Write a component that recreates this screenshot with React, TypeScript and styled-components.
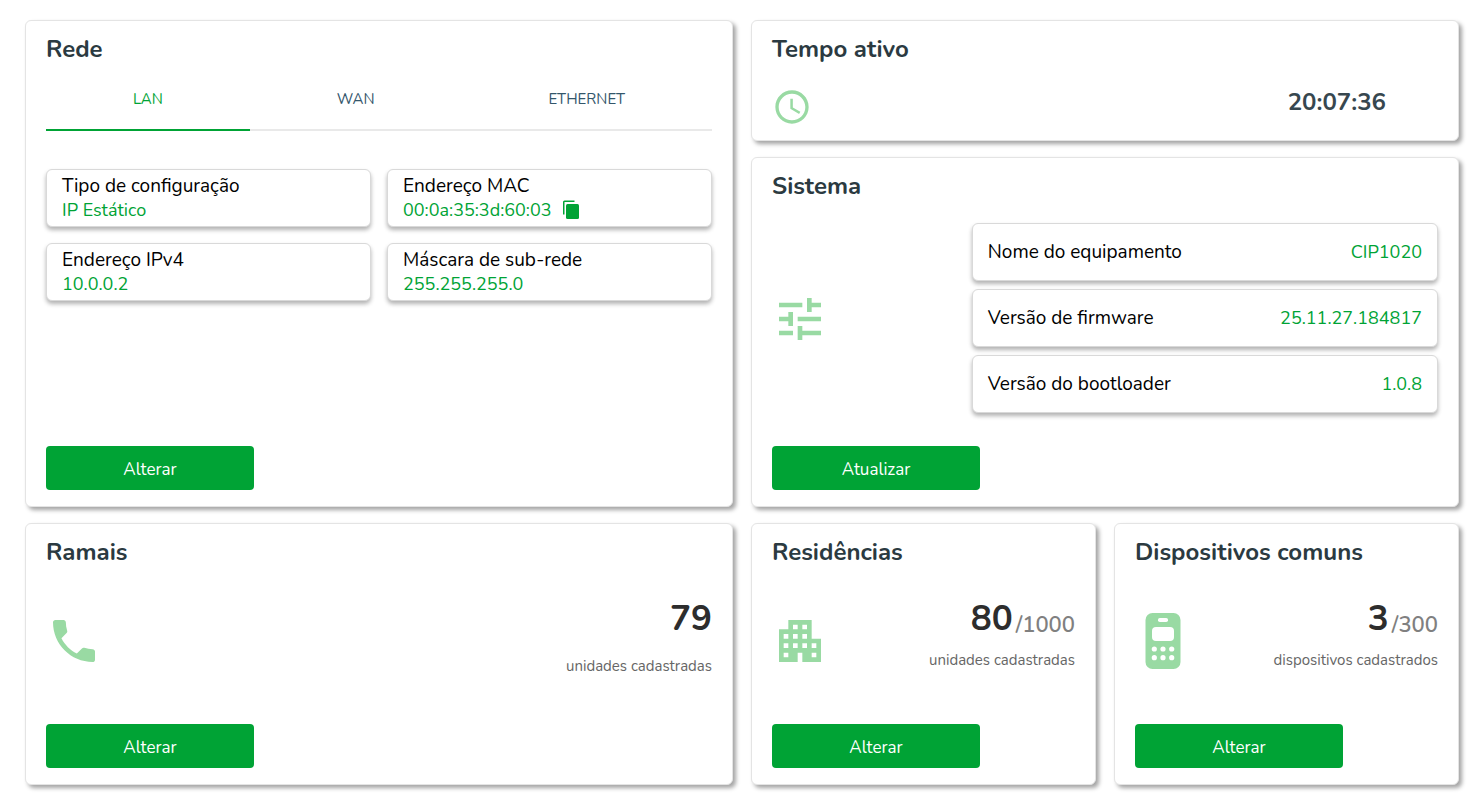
import React, { useState } from 'react';
import styled, { createGlobalStyle, css } from 'styled-components';
import { MdAccessTime, MdApartment, MdPhone, MdTune } from 'react-icons/md';

const green = '#00a335';
const paleGreen = '#99daa3';

const GlobalStyle = createGlobalStyle`
  *, *::before, *::after { box-sizing: border-box; }
  body {
    margin: 0;
    background: #fff;
    color: #000;
    font-family: Nunito, "Open Sans", "Noto Sans", sans-serif;
    font-size: 18px;
    line-height: 24px;
  }
  button { font-family: inherit; }
`;

const Dashboard = styled.main`
  display: grid;
  grid-template-columns: repeat(2, minmax(0, 1fr));
  gap: 16px 18px;
  padding: 20px 15px 16px 25px;
`;

const Stack = styled.div`
  display: flex;
  flex-direction: column;
  gap: 16px;
`;

const Pair = styled.div`
  display: grid;
  grid-template-columns: repeat(2, minmax(0, 1fr));
  gap: 18px;
`;

const Card = styled.section<{ $minHeight?: number }>`
  display: flex;
  flex-direction: column;
  min-height: ${p => p.$minHeight ?? 0}px;
  padding: 12px 20px;
  border: 1px solid #e4e4e4;
  border-radius: 6px;
  background: #fff;
  box-shadow: 3px 3px 4px rgba(0, 0, 0, 0.36);
`;

const Title = styled.h2`
  margin: 0;
  color: #2b3a41;
  font-size: 24px;
  font-weight: 700;
  line-height: 32px;
`;

const Tabs = styled.div`
  display: flex;
  margin-bottom: 38px;
  padding-top: 2px;
`;

const Tab = styled.button<{ $active: boolean }>`
  flex: 1 1 auto;
  height: 64px;
  padding: 2px 0 0;
  border: 0;
  border-bottom: 2px solid ${p => (p.$active ? green : '#e9e9e9')};
  background: none;
  color: ${p => (p.$active ? green : '#33566b')};
  font-size: 15px;
  line-height: 20px;
  cursor: pointer;
`;

const InfoGrid = styled.dl`
  display: grid;
  grid-template-columns: repeat(2, minmax(0, 1fr));
  gap: 16px;
  margin: 0 0 24px;
`;

const InfoList = styled.dl`
  display: flex;
  flex: 0 0 70%;
  flex-direction: column;
  gap: 8px;
  margin: 0;
`;

const InfoBox = styled.div<{ $inline?: boolean }>`
  min-height: 58px;
  padding: 4px 15px;
  border: 1px solid #d9d9d9;
  border-radius: 6px;
  background: #fff;
  box-shadow: 0 3px 4px rgba(0, 0, 0, 0.3);
  ${p =>
    p.$inline &&
    css`
      display: flex;
      align-items: center;
      justify-content: space-between;
    `}
`;

const InfoLabel = styled.dt`
  font-size: 19px;
`;

const InfoValue = styled.dd`
  display: flex;
  align-items: center;
  gap: 10px;
  margin: 0;
  color: ${green};
`;

const CopyButton = styled.button`
  display: flex;
  padding: 0;
  border: 0;
  background: none;
  color: ${green};
  cursor: pointer;
`;

const ActionButton = styled.button`
  width: 208px;
  height: 44px;
  margin: auto 0 4px;
  padding: 4px 0 0;
  border: 0;
  border-radius: 4px;
  background: ${green};
  color: #fff;
  font-size: 17px;
  line-height: 24px;
  cursor: pointer;
`;

const IconSlot = styled.div`
  display: flex;
  flex: 1;
  align-items: center;
  color: ${paleGreen};
`;

const UptimeRow = styled.div`
  display: flex;
  align-items: center;
  padding: 22px 52px 0 0;
`;

const Uptime = styled.time`
  padding-bottom: 10px;
  color: #37474f;
  font-size: 24px;
  font-weight: 700;
  line-height: 30px;
`;

const SystemRow = styled.div`
  display: flex;
  margin: 21px 0 32px;

  ${IconSlot} {
    padding-top: 2px;
  }
`;

const CountRow = styled.div`
  display: flex;
  align-items: flex-start;
  padding: 27px 0 28px;

  ${IconSlot} {
    padding-top: 18px;
  }
`;

const Counter = styled.div`
  text-align: right;
`;

const Count = styled.p<{ $gap: number }>`
  margin: 0 0 ${p => p.$gap}px;
  color: #2d2d2d;
  font-size: 35px;
  font-weight: 700;
  line-height: 48px;
`;

const Limit = styled.span`
  display: inline-block;
  margin-left: 3px;
  color: #808080;
  font-size: 22px;
  font-weight: 600;
  line-height: 24px;
  vertical-align: -2px;
`;

const Caption = styled.p`
  margin: 0;
  color: #666;
  font-size: 15px;
  line-height: 20px;
`;

const CopyIcon = () => (
  <svg width="18" height="20" viewBox="0 0 18 20" fill="currentColor" aria-hidden="true">
    <path d="M1 14.5V2a1.5 1.5 0 0 1 1.500-1.500H12.500V2H2.500v12.500Z" />
    <rect x="4" y="4" width="13" height="15" rx="1.500" />
  </svg>
);

const IntercomIcon = () => (
  <svg width="56" height="56" viewBox="0 0 56 56" aria-hidden="true">
    <rect x="10.500" width="35" height="56" rx="7" fill="currentColor" />
    <g fill="#fff">
      <rect x="23" y="5" width="10" height="4" rx="1.800" />
      <rect x="17" y="14" width="22" height="14" rx="4" />
      {[36, 44.700].map(y =>
        [19.300, 28, 36.700].map(x => <circle key={`${x}-${y}`} cx={x} cy={y} r="2.600" />),
      )}
    </g>
  </svg>
);

const tabs = ['LAN', 'WAN', 'ETHERNET'];

const network = [
  { label: 'Tipo de configuração', value: 'IP Estático' },
  { label: 'Endereço MAC', value: '00:0a:35:3d:60:03', copy: true },
  { label: 'Endereço IPv4', value: '10.0.0.2' },
  { label: 'Máscara de sub-rede', value: '255.255.255.0' },
];

const system = [
  { label: 'Nome do equipamento', value: 'CIP1020' },
  { label: 'Versão de firmware', value: '25.11.27.184817' },
  { label: 'Versão do bootloader', value: '1.0.8' },
];

type CountCardProps = {
  title: string;
  icon: React.ReactNode;
  count: number;
  limit?: number;
  caption: string;
};

const CountCard = ({ title, icon, count, limit, caption }: CountCardProps) => (
  <Card $minHeight={262}>
    <Title>{title}</Title>
    <CountRow>
      <IconSlot>{icon}</IconSlot>
      <Counter>
        <Count $gap={limit ? 7 : 13}>
          {count}
          {limit && <Limit>/{limit}</Limit>}
        </Count>
        <Caption>{caption}</Caption>
      </Counter>
    </CountRow>
    <ActionButton type="button">Alterar</ActionButton>
  </Card>
);

export default function App() {
  const [active, setActive] = useState('LAN');

  return (
    <>
      <GlobalStyle />
      <Dashboard>
        <Card>
          <Title>Rede</Title>
          <Tabs role="tablist">
            {tabs.map(tab => (
              <Tab
                key={tab}
                type="button"
                role="tab"
                aria-selected={tab === active}
                $active={tab === active}
                onClick={() => setActive(tab)}
              >
                {tab}
              </Tab>
            ))}
          </Tabs>
          <InfoGrid>
            {network.map(item => (
              <InfoBox key={item.label}>
                <InfoLabel>{item.label}</InfoLabel>
                <InfoValue>
                  {item.value}
                  {item.copy && (
                    <CopyButton type="button" aria-label="Copiar endereço MAC">
                      <CopyIcon />
                    </CopyButton>
                  )}
                </InfoValue>
              </InfoBox>
            ))}
          </InfoGrid>
          <ActionButton type="button">Alterar</ActionButton>
        </Card>

        <Stack>
          <Card $minHeight={121}>
            <Title>Tempo ativo</Title>
            <UptimeRow>
              <IconSlot>
                <MdAccessTime size={40} />
              </IconSlot>
              <Uptime>20:07:36</Uptime>
            </UptimeRow>
          </Card>
          <Card $minHeight={350}>
            <Title>Sistema</Title>
            <SystemRow>
              <IconSlot>
                <MdTune size={56} />
              </IconSlot>
              <InfoList>
                {system.map(item => (
                  <InfoBox key={item.label} $inline>
                    <InfoLabel>{item.label}</InfoLabel>
                    <InfoValue>{item.value}</InfoValue>
                  </InfoBox>
                ))}
              </InfoList>
            </SystemRow>
            <ActionButton type="button">Atualizar</ActionButton>
          </Card>
        </Stack>

        <CountCard title="Ramais" icon={<MdPhone size={56} />} count={79} caption="unidades cadastradas" />

        <Pair>
          <CountCard
            title="Residências"
            icon={<MdApartment size={56} />}
            count={80}
            limit={1000}
            caption="unidades cadastradas"
          />
          <CountCard
            title="Dispositivos comuns"
            icon={<IntercomIcon />}
            count={3}
            limit={300}
            caption="dispositivos cadastrados"
          />
        </Pair>
      </Dashboard>
    </>
  );
}
